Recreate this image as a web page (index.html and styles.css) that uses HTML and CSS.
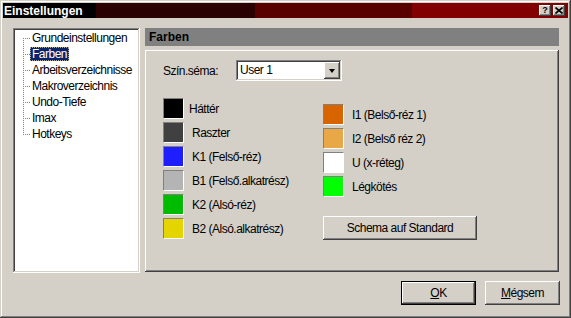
FILE: index.html
```html
<!DOCTYPE html>
<html lang="de">
<head>
    <meta charset="UTF-8">
    <meta name="viewport" content="width=device-width, initial-scale=1.0">
    <title>Einstellungen</title>
    <link rel="stylesheet" href="styles.css">
</head>
<body>

    <div class="window">
        <!-- Title bar -->
        <div class="titlebar">
            <span class="title">Einstellungen</span>
            <div class="caption-buttons">
                <span class="cap-btn help">?</span>
                <span class="cap-btn">
                    <svg width="8" height="7" viewBox="0 0 8 7">
                        <path d="M0.5 0.5 L7.5 6.5 M7.5 0.5 L0.5 6.5" stroke="#000" stroke-width="1.6" fill="none"/>
                    </svg>
                </span>
            </div>
        </div>

        <div class="main">
            <!-- Tree -->
            <ul class="tree">
                <li class="first"><span class="branch"></span><span class="node">Grundeinstellungen</span></li>
                <li><span class="branch"></span><span class="node selected">Farben</span></li>
                <li><span class="branch"></span><span class="node">Arbeitsverzeichnisse</span></li>
                <li><span class="branch"></span><span class="node">Makroverzeichnis</span></li>
                <li><span class="branch"></span><span class="node">Undo-Tiefe</span></li>
                <li><span class="branch"></span><span class="node">Imax</span></li>
                <li class="last"><span class="branch"></span><span class="node">Hotkeys</span></li>
            </ul>

            <!-- Page -->
            <div class="page">
                <div class="page-header">Farben</div>
                <div class="page-box">
                    <div class="scheme-row">
                        <span class="scheme-label">Szín.séma:</span>
                        <div class="combo">
                            <span class="combo-value">User 1</span>
                            <span class="combo-btn"><span class="arrow"></span></span>
                        </div>
                    </div>

                    <div class="colors">
                        <div class="color-col">
                            <div class="color-row"><span class="swatch" style="background:#000000"></span><span class="color-label first-label">Háttér</span></div>
                            <div class="color-row"><span class="swatch" style="background:#404040"></span><span class="color-label">Raszter</span></div>
                            <div class="color-row"><span class="swatch" style="background:#1e1eff"></span><span class="color-label">K1 (Felső-réz)</span></div>
                            <div class="color-row"><span class="swatch" style="background:#b4b4b4"></span><span class="color-label">B1 (Felső.alkatrész)</span></div>
                            <div class="color-row"><span class="swatch" style="background:#00bc00"></span><span class="color-label">K2 (Alsó-réz)</span></div>
                            <div class="color-row"><span class="swatch" style="background:#e4d400"></span><span class="color-label">B2 (Alsó.alkatrész)</span></div>
                        </div>
                        <div class="color-col right">
                            <div class="color-row"><span class="swatch" style="background:#d86400"></span><span class="color-label">I1 (Belső-réz 1)</span></div>
                            <div class="color-row"><span class="swatch" style="background:#e8a848"></span><span class="color-label">I2 (Belső réz 2)</span></div>
                            <div class="color-row"><span class="swatch" style="background:#ffffff"></span><span class="color-label">U (x-réteg)</span></div>
                            <div class="color-row"><span class="swatch" style="background:#00ff00"></span><span class="color-label">Légkötés</span></div>
                            <button class="btn schema-btn">Schema auf Standard</button>
                        </div>
                    </div>
                </div>
            </div>
        </div>

        <!-- Dialog buttons -->
        <div class="footer">
            <button class="btn default"><u>O</u>K</button>
            <button class="btn"><u>M</u>égsem</button>
        </div>
    </div>

</body>
</html>
```

FILE: styles.css
```css
body {
    margin: 0;
    padding: 0;
    font-family: "Liberation Sans", Arial, sans-serif;
    font-size: 12px;
    letter-spacing: -0.5px;
    color: #000;
    background-color: #d4d0c8;
}
.window {
    width: 571px;
    height: 318px;
    box-sizing: border-box;
    padding: 3px 3px 4px 3px;
    background-color: #d4d0c8;
    box-shadow: inset -1px -1px #404040, inset 1px 1px #d4d0c8,
                inset -2px -2px #808080, inset 2px 2px #fff;
    display: flex;
    flex-direction: column;
}

/* Title bar */
.titlebar {
    height: 15px;
    display: flex;
    align-items: center;
    justify-content: space-between;
    padding: 0 3px 0 1px;
    background: linear-gradient(to right,
        #000 0 93px, #2b0000 93px 252px, #580000 252px 409px, #820000 409px);
}
.title {
    color: #fff;
    font-weight: bold;
    font-size: 12px;
    letter-spacing: 0;
    line-height: 15px;
    padding-top: 1px;
}
.caption-buttons {
    display: flex;
    gap: 2px;
}
.cap-btn {
    width: 12px;
    height: 11px;
    box-sizing: border-box;
    display: flex;
    align-items: center;
    justify-content: center;
    background-color: #d4d0c8;
    box-shadow: inset -1px -1px #404040, inset 1px 1px #fff, inset -2px -2px #808080;
    font-weight: bold;
    font-size: 9px;
    letter-spacing: 0;
    line-height: 9px;
}

/* Main area */
.main {
    display: flex;
    gap: 5px;
    padding: 10px 0 0 10px;
    height: 255px;
    box-sizing: border-box;
}
.tree {
    width: 127px;
    height: 245px;
    box-sizing: border-box;
    margin: 0;
    padding: 2px 0 0 10px;
    list-style: none;
    background-color: #fff;
    box-shadow: inset -1px -1px #fff, inset 1px 1px #808080,
                inset -2px -2px #d4d0c8, inset 2px 2px #404040;
}
.tree li {
    display: flex;
    align-items: center;
    height: 16px;
}
.branch {
    flex: none;
    width: 7px;
    height: 16px;
    background:
        repeating-linear-gradient(to right, #808080 0 1px, transparent 1px 2px) 0 8px / 7px 1px no-repeat,
        repeating-linear-gradient(to bottom, #808080 0 1px, transparent 1px 2px) 0 0 / 1px 16px no-repeat;
}
.tree li.first .branch {
    background:
        repeating-linear-gradient(to right, #808080 0 1px, transparent 1px 2px) 0 8px / 7px 1px no-repeat,
        repeating-linear-gradient(to bottom, #808080 0 1px, transparent 1px 2px) 0 8px / 1px 8px no-repeat;
}
.tree li.last .branch {
    background:
        repeating-linear-gradient(to right, #808080 0 1px, transparent 1px 2px) 0 8px / 7px 1px no-repeat,
        repeating-linear-gradient(to bottom, #808080 0 1px, transparent 1px 2px) 0 0 / 1px 9px no-repeat;
}
.node {
    padding: 0 2px;
    line-height: 14px;
    white-space: nowrap;
}
.node.selected {
    background-color: #0a246a;
    color: #fff;
    outline: 1px dotted #b0a890;
    outline-offset: -1px;
}

/* Page */
.page {
    width: 414px;
    display: flex;
    flex-direction: column;
}
.page-header {
    height: 18px;
    line-height: 18px;
    padding-left: 4px;
    margin-bottom: 4px;
    background-color: #808080;
    font-weight: bold;
    font-size: 12px;
    letter-spacing: 0;
}
.page-box {
    height: 222px;
    box-sizing: border-box;
    padding: 10px 0 0 18px;
    box-shadow: inset -1px -1px #404040, inset 1px 1px #fff, inset -2px -2px #808080;
}
.scheme-row {
    display: flex;
    align-items: center;
}
.scheme-label {
    width: 73px;
}
.combo {
    width: 106px;
    height: 21px;
    box-sizing: border-box;
    padding: 2px;
    display: flex;
    background-color: #fff;
    box-shadow: inset -1px -1px #fff, inset 1px 1px #808080,
                inset -2px -2px #d4d0c8, inset 2px 2px #404040;
}
.combo-value {
    flex: 1;
    padding-left: 2px;
    line-height: 17px;
}
.combo-btn {
    width: 16px;
    display: flex;
    align-items: center;
    justify-content: center;
    background-color: #d4d0c8;
    box-shadow: inset -1px -1px #404040, inset 1px 1px #fff, inset -2px -2px #808080;
}
.arrow {
    width: 0;
    height: 0;
    border-left: 3px solid transparent;
    border-right: 3px solid transparent;
    border-top: 4px solid #000;
    margin-left: -1px;
}

.colors {
    display: flex;
    margin-top: 17px;
}
.color-col {
    width: 160px;
    display: flex;
    flex-direction: column;
    gap: 3px;
}
.color-col.right {
    margin-top: 6px;
}
.color-row {
    display: flex;
    align-items: center;
}
.swatch {
    width: 21px;
    height: 21px;
    box-sizing: border-box;
    border: 1px solid;
    border-color: #808080 #fff #fff #808080;
}
.color-label {
    margin-left: 8px;
}
.color-label.first-label {
    margin-left: 5px;
}

/* Buttons */
.btn {
    font-family: "Liberation Sans", Arial, sans-serif;
    font-size: 12px;
    letter-spacing: -0.5px;
    color: #000;
    background-color: #d4d0c8;
    border: none;
    padding: 0;
    height: 24px;
    box-shadow: inset -1px -1px #404040, inset 1px 1px #fff,
                inset -2px -2px #808080, inset 2px 2px #d4d0c8;
}
.btn u {
    text-decoration: underline;
}
.schema-btn {
    width: 154px;
    margin-top: 16px;
}
.btn.default {
    box-shadow: inset 0 0 0 1px #000, inset -2px -2px #404040, inset 2px 2px #fff,
                inset -3px -3px #808080;
}
.footer {
    display: flex;
    justify-content: flex-end;
    gap: 9px;
    padding: 8px 8px 0 0;
}
.footer .btn {
    width: 75px;
}
```
